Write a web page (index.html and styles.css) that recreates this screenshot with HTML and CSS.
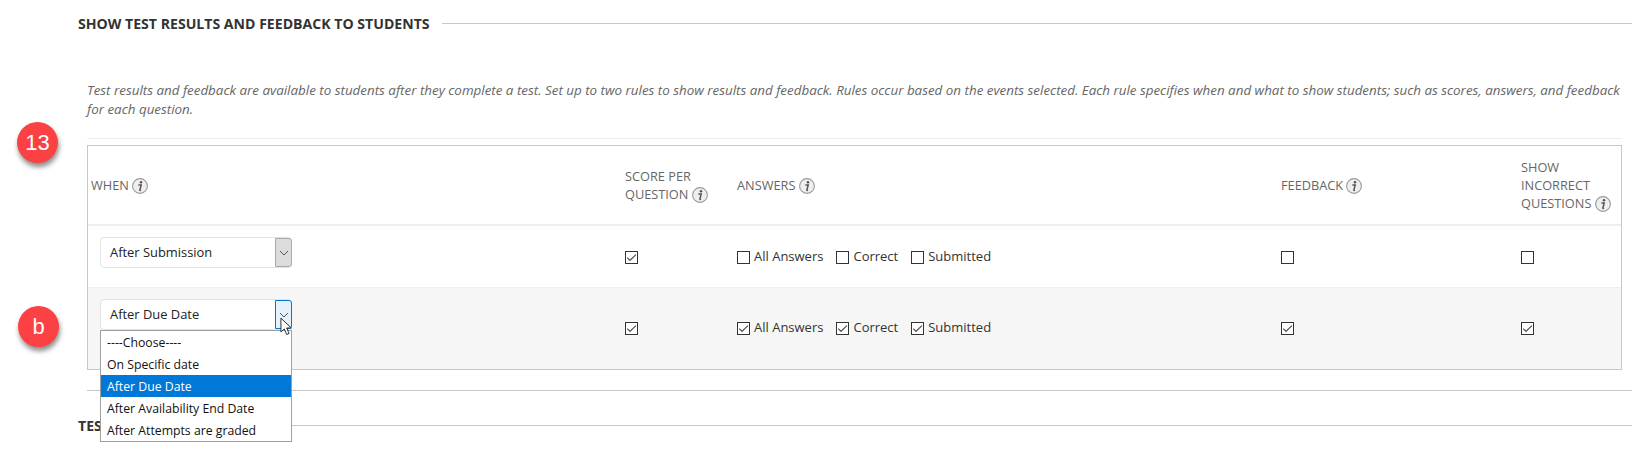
FILE: index.html
```html
<!DOCTYPE html>
<html lang="en">
<head>
<meta charset="utf-8">
<title>Show test results and feedback</title>
<link rel="stylesheet" href="styles.css">
</head>
<body>
<svg class="sprite" width="0" height="0" aria-hidden="true">
  <symbol id="info" viewBox="0 0 16 16">
    <circle cx="8" cy="8" r="7.4" fill="#efefef" stroke="#999" stroke-width="1.1"/>
    <circle cx="9" cy="4.3" r="1.25" fill="#555"/>
    <path d="M6.4 7.1h2.8l-1.3 4.9c-.1.5.2.5 1.1.1" fill="none" stroke="#555" stroke-width="1.5"/>
  </symbol>
  <symbol id="tick" viewBox="0 0 11 11">
    <path d="M1.2 5.6l2.8 2.7L10 2.6" fill="none" stroke="#555" stroke-width="1.2"/>
  </symbol>
  <symbol id="chev" viewBox="0 0 10 6">
    <path d="M1 1l4 4 4-4" fill="none" stroke="#555" stroke-width="1"/>
  </symbol>
</svg>
<main class="page">
  <h2 class="legend"><span>SHOW TEST RESULTS AND FEEDBACK TO STUDENTS</span></h2>
  <section class="body">
    <p class="note">Test results and feedback are available to students after they complete a test. Set up to two rules to show results and feedback. Rules occur based on the events selected. Each rule specifies when and what to show students; such as scores, answers, and feedback for each question.</p>
    <div class="panel">
      <div class="row head">
        <div class="c-when">WHEN <svg class="info"><use href="#info"/></svg></div>
        <div class="c-score">SCORE PER<br>QUESTION <svg class="info"><use href="#info"/></svg></div>
        <div class="c-ans">ANSWERS <svg class="info"><use href="#info"/></svg></div>
        <div class="c-fb">FEEDBACK <svg class="info"><use href="#info"/></svg></div>
        <div class="c-inc">SHOW<br>INCORRECT<br>QUESTIONS <svg class="info"><use href="#info"/></svg></div>
      </div>
      <div class="row rule">
        <div class="c-when"><div class="select"><span class="value">After Submission</span><span class="arrow"><svg class="chev"><use href="#chev"/></svg></span></div></div>
        <div class="c-score"><span class="box on"><svg><use href="#tick"/></svg></span></div>
        <div class="c-ans opts">
          <label class="opt"><span class="box"></span>All Answers</label>
          <label class="opt"><span class="box"></span>Correct</label>
          <label class="opt"><span class="box"></span>Submitted</label>
        </div>
        <div class="c-fb"><span class="box"></span></div>
        <div class="c-inc"><span class="box"></span></div>
      </div>
      <div class="row rule alt">
        <div class="c-when"><div class="select open"><span class="value">After Due Date</span><span class="arrow"><svg class="chev"><use href="#chev"/></svg></span>
          <ul class="menu">
            <li>----Choose----</li>
            <li>On Specific date</li>
            <li class="sel">After Due Date</li>
            <li>After Availability End Date</li>
            <li>After Attempts are graded</li>
          </ul>
          <svg class="cursor" viewBox="0 0 14 20"><path d="M1 1v15l3.6-3.4 2.6 6 2.6-1.1-2.6-5.9h5z" fill="#fff" stroke="#222" stroke-width="1"/></svg>
        </div></div>
        <div class="c-score"><span class="box on"><svg><use href="#tick"/></svg></span></div>
        <div class="c-ans opts">
          <label class="opt"><span class="box on"><svg><use href="#tick"/></svg></span>All Answers</label>
          <label class="opt"><span class="box on"><svg><use href="#tick"/></svg></span>Correct</label>
          <label class="opt"><span class="box on"><svg><use href="#tick"/></svg></span>Submitted</label>
        </div>
        <div class="c-fb"><span class="box on"><svg><use href="#tick"/></svg></span></div>
        <div class="c-inc"><span class="box on"><svg><use href="#tick"/></svg></span></div>
      </div>
    </div>
  </section>
  <h2 class="legend next"><span>TEST</span></h2>
</main>
<span class="badge b13">13</span>
<span class="badge bb">b</span>
</body>
</html>
```
FILE: styles.css
```css
* { box-sizing: border-box; }
html, body { margin: 0; height: 460px; overflow: hidden; background: #fff; }
body { font-family: "Open Sans", "Noto Sans", sans-serif; color: #333; position: relative; }
.sprite { position: absolute; }
.page { padding: 13px 0 0 78px; }
.legend { margin: 0; display: flex; align-items: center; gap: 12px; height: 20px; font-size: 14.1px; font-weight: 700; color: #333; }
.legend::after { content: ""; flex: 1; height: 1px; background: #c8c8c8; }
.body { margin-left: 9px; padding-top: 48px; padding-bottom: 20px; border-bottom: 1px solid #c8c8c8; }
.note { margin: 0 10px 0 0; padding-bottom: 19px; border-bottom: 1px solid #eee; font-size: 13.39px; line-height: 19px; font-style: italic; color: #666; }
.panel { margin: 6px 10px 0 0; border: 1px solid #c8c8c8; height: 225px; }
.row { display: grid; grid-template-columns: 537px 112px 544px 240px 1fr; align-items: start; font-size: 12.75px; }
.head { height: 80px; align-items: center; color: #666; line-height: 18px; border-bottom: 2px solid #eee; }
.rule { height: 62px; padding-top: 11px; border-bottom: 1px solid #eee; }
.alt { background: #f6f6f6; height: 81px; border-bottom: 0; }
.head .c-when { padding-left: 3px; }
.info { width: 16px; height: 16px; vertical-align: -4px; }
.c-when { padding-left: 12px; }
.select { position: relative; width: 192px; height: 31px; display: flex; align-items: center; justify-content: space-between; background: #fff; border: 1px solid #e2e2e2; border-radius: 4px; font-size: 12.9px; color: #222; }
.value { padding: 0 0 2px 9px; }
.arrow { width: 17px; height: 29px; margin-right: -1px; display: flex; align-items: center; justify-content: center; background: #dcdcdc; border: 1px solid #aaa; border-radius: 0 3px 3px 0; }
.chev { width: 10px; height: 6px; }
.open .arrow { background: #e5f1fb; border-color: #0078d7; }
.menu { position: absolute; z-index: 2; left: -1px; top: 30px; width: 192px; margin: 0; padding: 0; list-style: none; background: #fff; border: 1px solid #a0a0a0; }
.menu li { height: 22px; line-height: 24px; padding-left: 6px; font-size: 12.25px; color: #111; }
.menu .sel { background: #0078d7; color: #fff; }
.cursor { position: absolute; z-index: 3; right: -2px; top: 17px; width: 13px; height: 19px; }
.box { display: inline-block; width: 13px; height: 13px; border: 1px solid #333; background: #fff; flex: none; vertical-align: top; }
.box svg { display: block; width: 11px; height: 11px; }
.opts { display: flex; font-size: 13px; color: #333; }
.opt { display: flex; align-items: flex-start; gap: 4px; margin-right: 13px; line-height: 11px; }
.rule .c-score, .rule .c-ans, .rule .c-fb, .rule .c-inc { padding-top: 14px; line-height: 0; }
.rule .opt { line-height: 11px; }
.alt .c-score, .alt .c-ans, .alt .c-fb, .alt .c-inc { padding-top: 23px; }
.next { margin-top: 24px; }
.badge { position: absolute; width: 41px; height: 41px; border-radius: 50%; background: #fb4143; color: #fff; display: flex; align-items: center; justify-content: center; font-family: "Liberation Sans", sans-serif; font-size: 22px; box-shadow: 1px 4px 5px rgba(0,0,0,.45); }
.b13 { left: 17px; top: 122px; }
.bb { left: 18px; top: 306px; }
```
